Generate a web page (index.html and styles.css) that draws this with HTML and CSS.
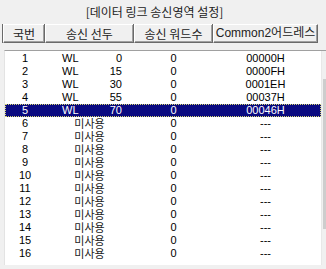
FILE: index.html
```html
<!DOCTYPE html>
<html>
<head>
<meta charset="utf-8">
<link rel="stylesheet" href="styles.css">
</head>
<body>
<div class="panel">
  <div class="title">[데이터 링크 송신영역 설정]</div>
  <div class="header">
    <div class="hcell c1">국번</div>
    <div class="hcell c2">송신 선두</div>
    <div class="hcell c3">송신 워드수</div>
    <div class="hcell c4">Common2어드레스</div>
  </div>
  <div class="listbox">
    <div class="rows">
      <div class="row"><span class="c1">1</span><span class="c2 split"><span class="dev">WL</span><span class="num">0</span></span><span class="c3">0</span><span class="c4">00000H</span></div>
      <div class="row"><span class="c1">2</span><span class="c2 split"><span class="dev">WL</span><span class="num">15</span></span><span class="c3">0</span><span class="c4">0000FH</span></div>
      <div class="row"><span class="c1">3</span><span class="c2 split"><span class="dev">WL</span><span class="num">30</span></span><span class="c3">0</span><span class="c4">0001EH</span></div>
      <div class="row"><span class="c1">4</span><span class="c2 split"><span class="dev">WL</span><span class="num">55</span></span><span class="c3">0</span><span class="c4">00037H</span></div>
      <div class="row selected"><span class="c1">5</span><span class="c2 split"><span class="dev">WL</span><span class="num">70</span></span><span class="c3">0</span><span class="c4">00046H</span></div>
      <div class="row"><span class="c1">6</span><span class="c2 ko">미사용</span><span class="c3">0</span><span class="c4">---</span></div>
      <div class="row"><span class="c1">7</span><span class="c2 ko">미사용</span><span class="c3">0</span><span class="c4">---</span></div>
      <div class="row"><span class="c1">8</span><span class="c2 ko">미사용</span><span class="c3">0</span><span class="c4">---</span></div>
      <div class="row"><span class="c1">9</span><span class="c2 ko">미사용</span><span class="c3">0</span><span class="c4">---</span></div>
      <div class="row"><span class="c1">10</span><span class="c2 ko">미사용</span><span class="c3">0</span><span class="c4">---</span></div>
      <div class="row"><span class="c1">11</span><span class="c2 ko">미사용</span><span class="c3">0</span><span class="c4">---</span></div>
      <div class="row"><span class="c1">12</span><span class="c2 ko">미사용</span><span class="c3">0</span><span class="c4">---</span></div>
      <div class="row"><span class="c1">13</span><span class="c2 ko">미사용</span><span class="c3">0</span><span class="c4">---</span></div>
      <div class="row"><span class="c1">14</span><span class="c2 ko">미사용</span><span class="c3">0</span><span class="c4">---</span></div>
      <div class="row"><span class="c1">15</span><span class="c2 ko">미사용</span><span class="c3">0</span><span class="c4">---</span></div>
      <div class="row"><span class="c1">16</span><span class="c2 ko">미사용</span><span class="c3">0</span><span class="c4">---</span></div>
    </div>
    <div class="scrollbar"><div class="thumb"></div></div>
  </div>
</div>
</body>
</html>
```

FILE: styles.css
```css
html, body {
  margin: 0;
  padding: 0;
  background: #f0f0f0;
  overflow: hidden;
}
body {
  width: 326px;
  height: 269px;
  font-family: "Liberation Sans", "Noto Sans CJK KR", sans-serif;
  font-size: 11px;
  color: #000;
}
.panel {
  display: flex;
  flex-direction: column;
  width: 340px;
}
.title {
  height: 24px;
  line-height: 24px;
  text-align: center;
  width: 309px;
  font-size: 12px;
  font-family: "Noto Sans CJK KR", sans-serif;
  color: #222;
}
.header {
  display: flex;
  margin-left: 3px;
  height: 19px;
}
.hcell {
  box-sizing: border-box;
  height: 19px;
  line-height: 17px;
  text-align: center;
  font-size: 12px;
  font-family: "Noto Sans CJK KR", sans-serif;
  background: #f0f0f0;
  border-top: 1px solid #fff;
  border-left: 1px solid #fff;
  border-right: 1px solid #6a6a6a;
  border-bottom: 1px solid #6a6a6a;
  box-shadow: inset -1px -1px 0 #a0a0a0, -1px 0 0 #6a6a6a;
  color: #222;
}
.header .c1 { width: 42px; }
.header .c2 { width: 89px; }
.header .c3 { width: 79px; }
.header .c4 { width: 105px; font-family: "Liberation Sans", "Noto Sans CJK KR", sans-serif; }

.listbox {
  display: flex;
  margin-top: 7px;
  margin-left: 4px;
  height: 214px;
  background: #fff;
  border-top: 1px solid #a0a0a0;
  border-left: 1px solid #e3e3e3;
}
.rows {
  width: 316px;
  padding-top: 1px;
}
.row {
  display: grid;
  grid-template-columns: 40px 89px 79px 105px;
  height: 13px;
  line-height: 13px;
  box-sizing: border-box;
}
.row > span { text-align: center; }
.row .split {
  display: flex;
  justify-content: space-between;
}
.row .dev { padding-left: 17px; }
.row .num { padding-right: 12px; }
.row .ko {
  font-family: "Noto Sans CJK KR", sans-serif;
  font-size: 11px;
  line-height: 13px;
  color: #222;
}
.row.selected {
  background: #0a0a80;
  color: #fff;
  outline: 1px dotted #d8d870;
  outline-offset: -1px;
}
.row.selected .ko { color: #fff; }
.scrollbar {
  width: 17px;
  background: #f0f0f0;
  border-left: 1px solid #e8e8e8;
  padding-top: 28px;
}
.thumb {
  width: 14px;
  height: 150px;
  margin-left: 1px;
  background: #cdcdcd;
}
```
